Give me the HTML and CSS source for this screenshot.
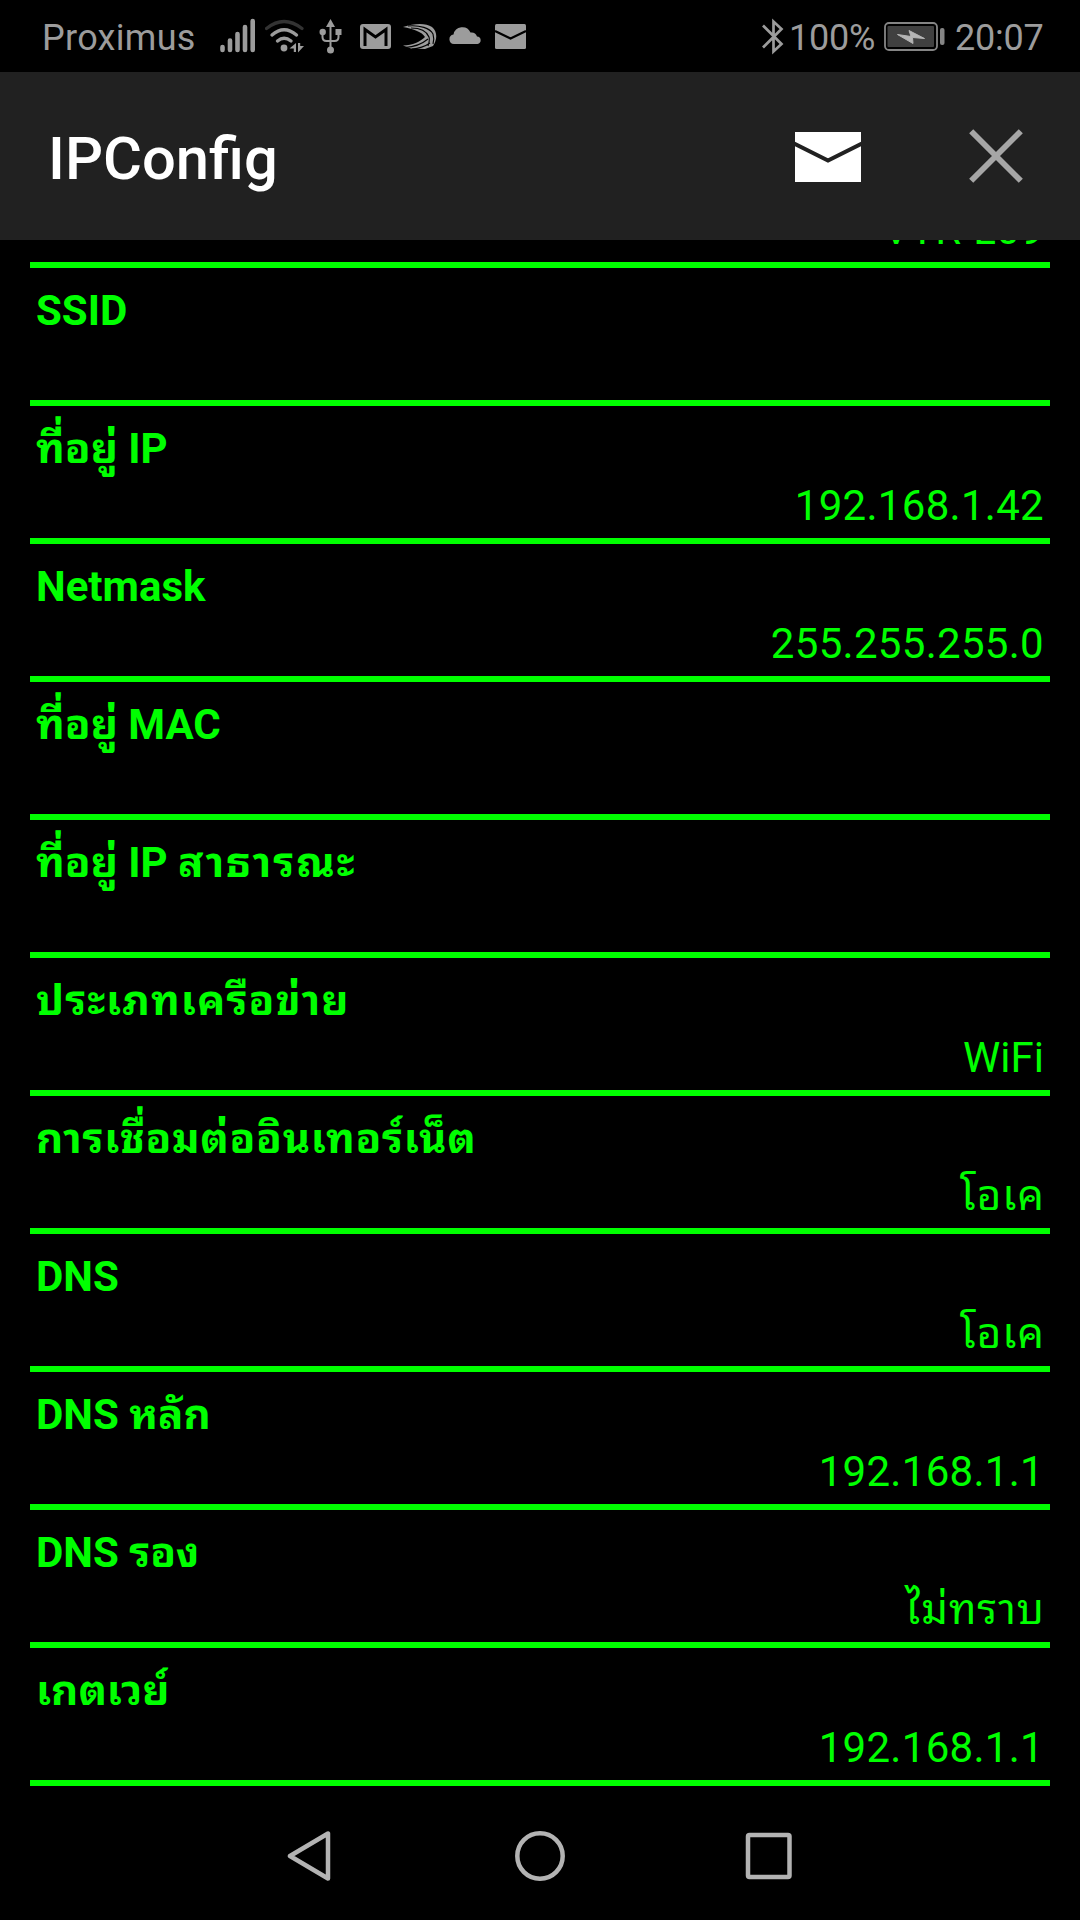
FILE: index.html
```html
<!DOCTYPE html>
<html lang="th">
<head>
    <meta charset="UTF-8">
    <meta name="viewport" content="width=device-width, initial-scale=1.0">
    <title>IPConfig</title>
    <link rel="stylesheet" href="styles.css">
</head>
<body>
<div class="screen">
    <div class="status-bar">
        <span class="carrier">Proximus</span>
        <svg class="signal" width="36" height="72" viewBox="0 0 36 72">
            <path d="M2.5 47v3M10 40.500v9.500M17.500 34v16M25 27v23M32.700 21v29" stroke="#9c9c9c" stroke-width="4.600" stroke-linecap="round"/>
        </svg>
        <svg class="wifi" width="40" height="72" viewBox="0 0 40 72" fill="none" stroke-linecap="round">
            <path d="M1.500 28.500Q19 14.500 37 28.500" stroke="#333" stroke-width="3.200"/>
            <path d="M7 35Q19 24.500 31.500 35M12.500 41Q19 35.500 26 41" stroke="#9c9c9c" stroke-width="3.400"/>
            <circle cx="19" cy="48" r="3.400" fill="#9c9c9c"/>
            <path d="M24.500 48.500L31 43v9h-2.200v-3.500zM33 43h2.200v3H39l-6 6.500z" fill="#9c9c9c"/>
        </svg>
        <svg class="usb" width="24" height="72" viewBox="0 0 24 72">
            <path d="M11.500 24v26M3.500 32v5q0 4 4 4h8q4 0 4-4v-5" fill="none" stroke="#9c9c9c" stroke-width="2"/>
            <path d="M11.500 19l4.500 8H7zM16.500 29h6v6h-6z" fill="#9c9c9c"/>
            <circle cx="3.700" cy="32" r="3.200" fill="#9c9c9c"/>
            <circle cx="11.500" cy="50" r="3.500" fill="#9c9c9c"/>
        </svg>
        <svg class="gmail" width="31" height="72" viewBox="0 0 31 72">
            <rect y="24" width="31" height="25" rx="3" fill="#9c9c9c"/>
            <path d="M5 46V29.500L15.500 37 26 29.500V46" fill="none" stroke="#000" stroke-width="3"/>
        </svg>
        <svg class="swift" width="34" height="72" viewBox="0 0 34 72">
            <path d="M0 27C12 23 23 23 29 27c6 5 5 13 1 19L22 49 8 48.500 0 45.500C10 45 17 42 22 37 19 32 11 29 0 27z" fill="#9c9c9c"/>
            <path d="M5 26C17 25 27 28 30 34c1 3 1 6 0 10M8 28C18 28 24 32 26 37c1 3 0 6-1 9M2 47.500C12 47 19 44 25 39M9 49c8-.5 13-2.500 18-6" fill="none" stroke="#000" stroke-width="1.100"/>
        </svg>
        <svg class="cloud" width="33" height="72" viewBox="0 0 33 72">
            <path d="M5 44a5 4.800 0 0 1-.5-9.500A9 9 0 0 1 21.500 32.500 6 6 0 0 1 28 36.500a4 3.800 0 0 1 .5 7.500z" fill="#9c9c9c"/>
        </svg>
        <svg class="mail-small" width="31" height="72" viewBox="0 0 31 72">
            <rect y="24" width="31" height="25" rx="1.500" fill="#9c9c9c"/>
            <path d="M0 31l15.500 7.500L31 31" fill="none" stroke="#000" stroke-width="2.200"/>
        </svg>
        <div class="status-right">
            <svg class="bluetooth" width="22" height="72" viewBox="0 0 22 72">
                <path d="M1 25.500L19.500 44 11.500 51.500V21.500l8 7.500L1 47.500" fill="none" stroke="#9c9c9c" stroke-width="2.700"/>
            </svg>
            <span class="percent">100%</span>
            <svg class="battery" width="62" height="72" viewBox="0 0 62 72">
                <rect x="1" y="23" width="52" height="27" rx="4" fill="none" stroke="#858585" stroke-width="1.800"/>
                <rect x="3.500" y="26" width="46.500" height="21" rx="1" fill="#404040"/>
                <path d="M13.500 34.500L27 36.500 25 30.500 40.500 38.500 28.500 37.500 29 43.500z" fill="#b5b5b5" stroke="#b5b5b5"/>
                <rect x="56" y="28" width="4.500" height="17" rx="2" fill="#858585"/>
            </svg>
            <span class="clock">20:07</span>
        </div>
    </div>

    <div class="app-bar">
        <h1>IPConfig</h1>
        <svg class="mail" width="66" height="50" viewBox="0 0 66 50">
            <path d="M0 0h66v50H0z" fill="#fff"/>
            <path d="M-2 11L33 28.500 68 11" fill="none" stroke="#212121" stroke-width="4"/>
        </svg>
        <svg class="close" width="54" height="54" viewBox="0 0 54 54">
            <path d="M2.200 2.200l49.600 49.600M51.800 2.200L2.200 51.800" stroke="#a6a6a6" stroke-width="5.800"/>
        </svg>
    </div>

    <div class="list">
        <div class="row">
            <div class="value number">VTR-L09</div>
        </div>
        <div class="row">
            <div class="label">SSID</div>
        </div>
        <div class="row">
            <div class="label">ที่อยู่ IP</div>
            <div class="value number">192.168.1.42</div>
        </div>
        <div class="row">
            <div class="label">Netmask</div>
            <div class="value number">255.255.255.0</div>
        </div>
        <div class="row">
            <div class="label">ที่อยู่ MAC</div>
        </div>
        <div class="row">
            <div class="label">ที่อยู่ IP <span class="public">สาธารณะ</span></div>
        </div>
        <div class="row">
            <div class="label network-type">ประเภทเครือข่าย</div>
            <div class="value">WiFi</div>
        </div>
        <div class="row">
            <div class="label connection">การเชื่อมต่ออินเทอร์เน็ต</div>
            <div class="value thai">โอเค</div>
        </div>
        <div class="row">
            <div class="label">DNS</div>
            <div class="value thai">โอเค</div>
        </div>
        <div class="row">
            <div class="label">DNS หลัก</div>
            <div class="value number">192.168.1.1</div>
        </div>
        <div class="row">
            <div class="label">DNS รอง</div>
            <div class="value thai">ไม่ทราบ</div>
        </div>
        <div class="row">
            <div class="label">เกตเวย์</div>
            <div class="value number">192.168.1.1</div>
        </div>
    </div>

    <div class="nav-bar">
        <svg width="50" height="50" viewBox="0 0 50 50">
            <path d="M4 25L42 2.500v45z"/>
        </svg>
        <svg width="50" height="50" viewBox="0 0 50 50">
            <circle cx="25" cy="25" r="22.700"/>
        </svg>
        <svg width="50" height="50" viewBox="0 0 50 50">
            <rect x="4" y="4" width="41.500" height="42" rx="1.500"/>
        </svg>
    </div>
</div>
</body>
</html>
```

FILE: styles.css
```css
* {
    box-sizing: border-box;
}

body {
    margin: 0;
    background: #000;
    font-family: Roboto, "Noto Sans Thai Looped", "Noto Looped Thai", Loma, Waree, Garuda, Laksaman, "Droid Sans Thai", Tahoma, sans-serif;
}

.screen {
    width: 1080px;
    height: 1920px;
    display: flex;
    flex-direction: column;
    overflow: hidden;
}

svg {
    display: block;
    flex-shrink: 0;
}

/* status bar */
.status-bar {
    height: 72px;
    flex-shrink: 0;
    display: flex;
    align-items: center;
    padding: 0 37px 0 42px;
    color: #9c9c9c;
    font-size: 36px;
    line-height: 72px;
    white-space: nowrap;
}

.carrier {
    width: 178px;
    padding-top: 3px;
    letter-spacing: 0.3px;
}

.wifi {
    margin-left: 9px;
}

.usb {
    margin-left: 14px;
}

.gmail {
    margin-left: 17px;
}

.swift,
.cloud {
    margin-left: 12px;
}

.mail-small {
    margin-left: 13px;
}

.status-right {
    display: flex;
    align-items: center;
    margin-left: auto;
}

.percent,
.clock {
    padding-top: 3px;
    letter-spacing: -0.2px;
}

.percent {
    width: 95px;
    margin-left: 5px;
}

.clock {
    width: 88px;
    margin-left: 9px;
}

/* title and actions */
.app-bar {
    height: 168px;
    flex-shrink: 0;
    display: flex;
    align-items: center;
    padding: 0 57px 0 48px;
    background: #212121;
}

.app-bar h1 {
    margin: 5px auto 0 0;
    color: #fff;
    font-size: 59.7px;
    font-weight: 500;
    line-height: 72px;
}

.mail {
    margin-top: 2px;
}

.close {
    margin-left: 108px;
}

/* property list */
.list {
    height: 1546px;
    flex-shrink: 0;
    display: flex;
    flex-direction: column;
    justify-content: flex-end;
    overflow: hidden;
    padding: 0 30px;
    color: #0f0;
}

.row {
    height: 138px;
    flex-shrink: 0;
    display: flex;
    flex-direction: column;
    padding: 18px 6px 7px;
    border-bottom: 6px solid #0f0;
    font-size: 42px;
    line-height: 50px;
}

.label {
    font-weight: bold;
}

.public {
    letter-spacing: 2px;
}

.network-type {
    letter-spacing: 1.15px;
}

.connection {
    letter-spacing: 0.7px;
}

.value {
    margin-top: auto;
    text-align: right;
}

.number {
    letter-spacing: 0.3px;
}

.thai {
    margin-right: -1px;
    letter-spacing: 1px;
}

/* navigation buttons */
.nav-bar {
    flex: 1;
    display: flex;
    justify-content: center;
    gap: 179px;
    padding-top: 45px;
}

.nav-bar svg {
    fill: none;
    stroke: #b3b3b3;
    stroke-width: 4.5;
    stroke-linejoin: round;
}
```
